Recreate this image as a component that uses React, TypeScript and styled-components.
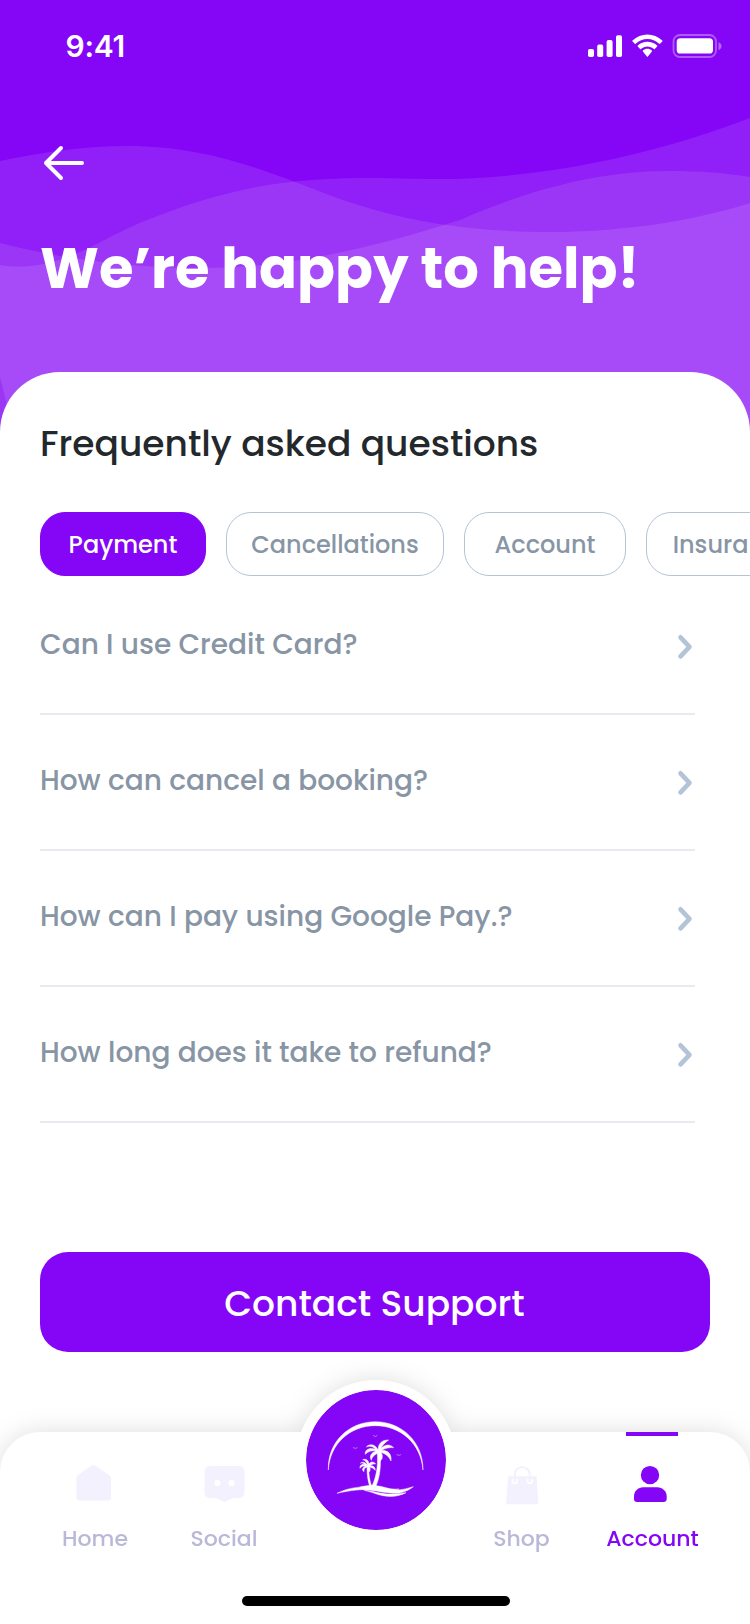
import React from 'react';
import styled, { createGlobalStyle } from 'styled-components';

const color = {
  primary: '#8505f6',
  page: '#fff',
  ink: '#23282c',
  muted: '#8795a5',
  outline: '#b4c3d7',
  rule: '#e8ebf0',
  tabText: '#bab8d8',
  tabIcon: '#f4f1fe',
};

const GlobalStyle = createGlobalStyle`
  * { box-sizing: border-box; }
  body {
    margin: 0;
    background: ${color.page};
    font-family: Poppins, Inter, 'Liberation Sans', sans-serif;
    -webkit-font-smoothing: antialiased;
  }
  button { font: inherit; border: 0; padding: 0; background: none; cursor: pointer; }
`;

const Screen = styled.div`
  width: 750px;
  height: 1624px;
  overflow: hidden;
  display: flex;
  flex-direction: column;
  background: ${color.page};
`;

const Hero = styled.header`
  position: relative;
  flex: none;
  height: 432px;
  background: ${color.primary};
  color: #fff;
`;

const Waves = styled.svg`
  position: absolute;
  inset: 0;
  width: 750px;
  height: 432px;
`;

const StatusBar = styled.div`
  position: relative;
  display: flex;
  align-items: center;
  justify-content: space-between;
  height: 92px;
  padding: 0 28px 0 65.5px;
`;

const Clock = styled.span`
  font: 600 30px/36px Inter, sans-serif;
  letter-spacing: -0.3px;
`;

const BackButton = styled.button`
  position: relative;
  display: block;
  width: 44px;
  height: 40px;
  margin: 51px 0 0 42px;
  color: #fff;
`;

const Title = styled.h1`
  position: relative;
  margin: 50px 0 0 40px;
  font-size: 56px;
  line-height: 72px;
  font-weight: 700;
  white-space: nowrap;
`;

const Sheet = styled.main`
  position: relative;
  flex: none;
  height: 1060px;
  margin-top: -60px;
  border-radius: 60px 60px 0 0;
  background: ${color.page};
`;

const SectionTitle = styled.h2`
  margin: 0;
  padding: 48px 0 0 40px;
  font-size: 36px;
  line-height: 48px;
  font-weight: 500;
  color: ${color.ink};
`;

const Chips = styled.div`
  display: flex;
  gap: 20px;
  margin-top: 44px;
  padding-left: 40px;
  overflow: hidden;
`;

const Chip = styled.button<{ $width: number; $active?: boolean }>`
  flex: none;
  width: ${(p) => p.$width}px;
  height: 64px;
  padding-top: 1px;
  border-radius: 25px;
  border: 1px solid ${(p) => (p.$active ? color.primary : color.outline)};
  background: ${(p) => (p.$active ? color.primary : 'transparent')};
  color: ${(p) => (p.$active ? '#fff' : color.muted)};
  font-size: 24px;
  font-weight: 500;
  line-height: 61px;
`;

const Questions = styled.ul`
  list-style: none;
  width: 655px;
  margin: 3px 0 0 39.5px;
  padding: 0;
`;

const Question = styled.li`
  display: flex;
  align-items: center;
  justify-content: space-between;
  height: 136px;
  padding: 1px 1px 0 0.5px;
  border-bottom: 2px solid ${color.rule};
  color: ${color.muted};
  font-size: 28px;
  line-height: 36px;
  font-weight: 500;
`;

const QuestionText = styled.span`
  margin-bottom: 4px;
`;

const SupportButton = styled.button`
  display: block;
  width: 670px;
  height: 100px;
  margin: 129px 0 0 40px;
  padding: 2px 1px 0 0;
  border-radius: 28px;
  background: ${color.primary};
  color: #fff;
  font-size: 36px;
  font-weight: 500;
`;

const NavBar = styled.nav`
  position: relative;
  flex: none;
  height: 192px;
  border-radius: 40px 40px 0 0;
  background: #fff;
  filter: drop-shadow(0 0 12px rgba(0, 0, 0, 0.13));
`;

const Tabs = styled.div`
  display: grid;
  grid-template-columns: 130px 128px 176px 115px 147px;
  height: 164px;
  padding-left: 30px;
`;

const Tab = styled.button<{ $active?: boolean }>`
  display: flex;
  flex-direction: column;
  align-items: center;
  color: ${(p) => (p.$active ? color.primary : color.tabText)};
  font-size: 22px;
  line-height: 28px;
  font-weight: 500;

  &::before {
    content: '';
    width: 52px;
    height: 4px;
    margin: 0 1px 26px 0;
    background: ${(p) => (p.$active ? color.primary : 'transparent')};
  }
`;

const TabLabel = styled.span`
  margin-top: 19px;
`;

const LogoButton = styled.button`
  display: flex;
  align-items: center;
  justify-content: center;
  justify-self: center;
  width: 160px;
  height: 160px;
  margin-top: -52px;
  border: 10px solid #fff;
  border-radius: 50%;
  background: ${color.primary};
  background-clip: padding-box;
`;

const HomeIndicator = styled.div`
  width: 268px;
  height: 10px;
  margin-left: 242px;
  border-radius: 5px;
  background: #000;
`;

const StatusIcons = () => (
  <svg width="136" height="26" viewBox="586 33 136 26" fill="#fff" aria-hidden="true">
    <rect x="588" y="49" width="6" height="8" rx="1.8" />
    <rect x="597.2" y="44.6" width="6" height="12.4" rx="1.8" />
    <rect x="606.6" y="40" width="6" height="17" rx="1.8" />
    <rect x="616" y="35.3" width="6" height="21.7" rx="1.8" />
    <g transform="translate(632 34.3)">
      <path d="M15.4 4.7c4.4 0 8.5 1.7 11.7 4.7.2.2.6.2.9 0l2.3-2.3c.3-.3.3-.7 0-1C22-1.9 8.8-1.9.5 6.1c-.3.3-.3.7 0 1l2.3 2.3c.3.3.6.3.9 0 3.2-3 7.3-4.7 11.7-4.7z" />
      <path d="M15.4 12.1c2.4 0 4.7.9 6.5 2.5.2.3.6.3.9 0l2.3-2.3c.3-.3.3-.7 0-1-5.5-5-13.9-5-19.3 0-.3.3-.3.7 0 1l2.3 2.3c.2.3.6.3.9 0 1.7-1.6 4-2.5 6.4-2.5z" />
      <path d="M19.9 17.2c.3-.3.3-.7 0-1-2.6-2.2-6.4-2.2-9 0-.3.3-.3.7 0 1l4 4.9c.3.3.7.3 1 0z" />
    </g>
    <rect x="673.5" y="35" width="42.5" height="22" rx="6.5" fill="none" stroke="#fff" strokeOpacity=".35" strokeWidth="1.8" />
    <rect x="676.7" y="38.2" width="36.3" height="15.3" rx="3.6" />
    <path d="M718.5 42.3c1.8.8 3 2.2 3 3.9s-1.2 3.2-3 3.9z" fillOpacity=".4" />
  </svg>
);

const BackIcon = () => (
  <svg width="44" height="40" viewBox="42 143 44 40" fill="none" stroke="#fff" strokeWidth="4" strokeLinecap="round" strokeLinejoin="round">
    <path d="M61 148 46 163l15 15M46 163h36" />
  </svg>
);

const ChevronIcon = () => (
  <svg width="18" height="28" viewBox="0 0 18 28" fill="none" stroke={color.outline} strokeWidth="4.6" strokeLinecap="round" strokeLinejoin="round">
    <path d="M4.5 4.3 13.5 13.8 4.5 23.3" />
  </svg>
);

const HomeIcon = () => (
  <svg width="44" height="44" viewBox="0 0 44 44" fill={color.tabIcon}>
    <path d="M18 3.8Q20.200 2.300 22.400 3.800L36.300 13.300Q38 14.500 38 16.600V35Q38 38.500 34.500 38.500H6.700Q3.300 38.500 3.300 35V16.600Q3.300 14.500 5 13.300Z" />
  </svg>
);

const SocialIcon = () => (
  <svg width="44" height="44" viewBox="0 0 44 44">
    <path fill={color.tabIcon} d="M8.500 4H36.500Q42.500 4 42.500 10V30Q42.500 36 36.500 36C32 36 30 36 28.500 37L24 39.600Q22.500 40.300 21 39.600L16.500 37C15 36 13 36 8.500 36Q2.500 36 2.500 30V10Q2.500 4 8.500 4Z" />
    <circle cx="15.500" cy="21" r="3.100" fill="#fff" />
    <circle cx="29.500" cy="21" r="3.100" fill="#fff" />
  </svg>
);

const ShopIcon = () => (
  <svg width="44" height="44" viewBox="0 0 44 44">
    <path fill={color.tabIcon} d="M8.200 14.300H36.600L38.500 42.300H6Z" />
    <path fill="none" stroke="#fff" strokeWidth="1.800" d="M13.300 17.200a2.400 2.400 0 1 0 3 0M28.300 17.200a2.400 2.400 0 1 0 3 0" />
    <path fill="none" stroke={color.tabIcon} strokeWidth="2.200" strokeLinecap="round" d="M14.800 18.500V12.500a7.500 7.500 0 0 1 15 0V18.500" />
  </svg>
);

const AccountIcon = () => (
  <svg width="44" height="44" viewBox="0 0 44 44" fill={color.primary}>
    <circle cx="19" cy="13.100" r="9.200" />
    <path d="M12.200 25.300H26.200C31.500 25.300 35.700 29.300 35.700 34.500V36.800Q35.700 40.100 32.400 40.100H6.200Q3 40.100 3 36.800V34.500C3 29.300 7 25.300 12.200 25.300Z" />
  </svg>
);

const IslandLogo = () => (
  <svg width="100" height="82" viewBox="3 3 300 246" fill="#fff" stroke="#fff" strokeWidth="1.4">
    <path d="M10 156C7 72 72 11 151 11s144 61 143 145C288 76 226 23 151 23S15 76 10 156Z" />
    <path d="M36 226C62 212 98 205 132 207C166 210 196 219 226 215C242 213 254 209 265 206C246 221 224 228 196 225C160 222 130 212 96 216C73 218 55 222 36 226Z" />
    <path d="M104 208C125 200 157 201 178 208C194 213 210 214 222 213C196 220 170 216 146 211C131 208 117 207 104 208Z" />
    <path d="M118 217C151 220 172 230 206 228C221 227 232 225 243 224C222 235 198 238 174 233C153 230 139 221 118 217Z" />
    <path d="M156 96C160 132 157 170 141 204H153C167 172 169 130 164 96Z" />
    <path d="M126 150C126 172 129 190 134 205H140C134 188 131 168 131 150Z" />
    <path d="M160 97C158 78 170 65 191 66C180 73 172 83 167 92C180 79 194 77 206 89C192 88 181 91 170 97C188 96 201 108 198 129C192 116 183 108 168 103C174 112 174 123 165 130C166 119 163 111 159 104C152 110 142 113 139 127C132 114 139 104 153 99C141 97 129 100 121 109C118 94 137 87 151 94C145 85 133 83 124 87C133 75 153 79 160 97Z" />
    <path d="M128 143C126 132 119 126 113 125C124 121 131 128 132 138C138 129 147 131 152 138C145 137 140 139 136 143C145 142 151 148 151 157C145 151 140 148 134 148C137 154 136 159 131 163C131 156 129 152 126 148C119 149 116 154 117 161C109 156 113 147 122 145C115 143 109 145 105 151C103 141 113 136 121 140C116 135 110 134 106 136C113 129 124 134 128 143Z" />
    <g fill="none" strokeWidth="1.6" strokeLinecap="round" strokeOpacity=".8">
      <path d="M145 53q4 0 6 3 2-3 5-3M85 89q4 0 6 3 2-3 5-3M216 110q4 0 6 3 2-3 5-3" />
    </g>
  </svg>
);

const questions = [
  'Can I use Credit Card?',
  'How can cancel a booking?',
  'How can I pay using Google Pay.?',
  'How long does it take to refund?',
];

export default function App() {
  return (
    <>
      <GlobalStyle />
      <Screen>
        <Hero>
          <Waves viewBox="0 0 750 432" fill="#fff" fillOpacity=".104" aria-hidden="true">
            <path d="M0 161C40 153 80 146 127 146C235 146 300 190 375 210C425 224 480 232 550 232C620 232 690 222 750 203V432H0Z" />
            <path d="M750 118C640 160 530 179 438 179C410 179 395 178 375 178C300 178 240 183 147 220C110 235 95 247 70 256C45 266 20 269 0 265V377C3 388 6 402 14 432H750Z" />
            <path d="M0 243C50 256 120 268 205 268C290 268 375 247 460 220C520 194 590 171 670 171C700 171 725 173 750 177V432H0Z" />
          </Waves>
          <StatusBar>
            <Clock>9:41</Clock>
            <StatusIcons />
          </StatusBar>
          <BackButton aria-label="Back">
            <BackIcon />
          </BackButton>
          <Title>We’re happy to help!</Title>
        </Hero>

        <Sheet>
          <SectionTitle>Frequently asked questions</SectionTitle>
          <Chips>
            <Chip $width={166} $active>Payment</Chip>
            <Chip $width={218}>Cancellations</Chip>
            <Chip $width={162}>Account</Chip>
            <Chip $width={174}>Insurance</Chip>
          </Chips>
          <Questions>
            {questions.map((text) => (
              <Question key={text}>
                <QuestionText>{text}</QuestionText>
                <ChevronIcon />
              </Question>
            ))}
          </Questions>
          <SupportButton>Contact Support</SupportButton>
        </Sheet>

        <NavBar>
          <Tabs>
            <Tab>
              <HomeIcon />
              <TabLabel>Home</TabLabel>
            </Tab>
            <Tab>
              <SocialIcon />
              <TabLabel>Social</TabLabel>
            </Tab>
            <LogoButton aria-label="Discover">
              <IslandLogo />
            </LogoButton>
            <Tab>
              <ShopIcon />
              <TabLabel>Shop</TabLabel>
            </Tab>
            <Tab $active>
              <AccountIcon />
              <TabLabel>Account</TabLabel>
            </Tab>
          </Tabs>
          <HomeIndicator />
        </NavBar>
      </Screen>
    </>
  );
}
